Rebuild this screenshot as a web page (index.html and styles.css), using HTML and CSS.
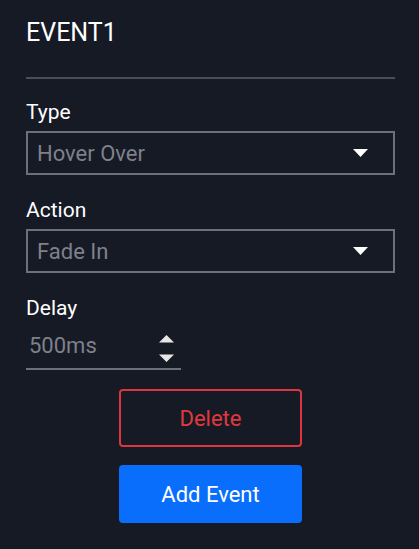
FILE: index.html
```html
<!DOCTYPE html>
<html>
<head>
<meta charset="utf-8">
<link rel="stylesheet" href="styles.css">
</head>
<body>
<div class="panel">
  <h1 class="title">EVENT1</h1>
  <hr class="divider">
  <div class="field">
    <label class="label">Type</label>
    <div class="select">
      <span class="select-value">Hover Over</span>
      <svg class="caret" width="15" height="8" viewBox="0 0 15 8"><path d="M0 0H15L7.5 8Z" fill="#ffffff"/></svg>
    </div>
  </div>
  <div class="field">
    <label class="label">Action</label>
    <div class="select">
      <span class="select-value">Fade In</span>
      <svg class="caret" width="15" height="8" viewBox="0 0 15 8"><path d="M0 0H15L7.5 8Z" fill="#ffffff"/></svg>
    </div>
  </div>
  <div class="field">
    <label class="label">Delay</label>
    <div class="number">
      <span class="number-value">500ms</span>
      <span class="spinner">
        <svg width="15" height="8" viewBox="0 0 15 8"><path d="M7.5 0L15 7.5H0Z" fill="#e6e6e6"/></svg>
        <svg width="15" height="8" viewBox="0 0 15 8"><path d="M0 0.5H15L7.5 8Z" fill="#e6e6e6"/></svg>
      </span>
    </div>
  </div>
  <div class="actions">
    <button class="btn btn-delete">Delete</button>
    <button class="btn btn-add">Add Event</button>
  </div>
</div>
</body>
</html>
```
FILE: styles.css
```css
html, body {
  margin: 0;
  padding: 0;
  background: #161a25;
}
body {
  font-family: Roboto, "Liberation Sans", sans-serif;
  color: #ffffff;
  width: 419px;
  height: 549px;
  overflow: hidden;
}
.panel {
  padding: 19px 24px 0 26px;
}
.title {
  margin: 0;
  font-size: 25px;
  line-height: 28px;
  font-weight: 400;
  color: #ffffff;
}
.divider {
  margin: 30px 0 0 0;
  border: 0;
  height: 2px;
  background: #4a4e5a;
}
.field {
  margin-top: 21px;
}
.field + .field {
  margin-top: 23px;
}
.label {
  display: block;
  font-size: 21px;
  line-height: 24px;
  color: #ffffff;
}
.select {
  margin-top: 7px;
  height: 44px;
  box-sizing: border-box;
  border: 2px solid #6c707b;
  display: flex;
  align-items: center;
  justify-content: space-between;
  padding: 0 25px 0 9px;
}
.select-value {
  font-size: 22px;
  color: #7e818b;
}
.caret {
  display: block;
}
.number {
  margin-top: 5px;
  width: 155px;
  height: 45px;
  box-sizing: border-box;
  border-bottom: 2px solid #6c707b;
  padding: 9px 7px 0 3px;
  display: flex;
  align-items: flex-start;
  justify-content: space-between;
}
.number-value {
  font-size: 22px;
  line-height: 24px;
  color: #7e818b;
}
.spinner {
  margin-top: 1px;
  display: flex;
  flex-direction: column;
  gap: 11px;
}
.spinner svg {
  display: block;
}
.actions {
  display: flex;
  flex-direction: column;
  align-items: center;
  gap: 18px;
  margin-top: 19px;
}
.btn {
  width: 183px;
  height: 58px;
  border-radius: 4px;
  font-family: Roboto, "Liberation Sans", sans-serif;
  font-size: 22px;
  cursor: pointer;
  padding: 0;
}
.btn-delete {
  background: transparent;
  border: 2px solid #dc3540;
  color: #e0383f;
}
.btn-add {
  background: #0a6efd;
  border: 0;
  color: #ffffff;
}
```
